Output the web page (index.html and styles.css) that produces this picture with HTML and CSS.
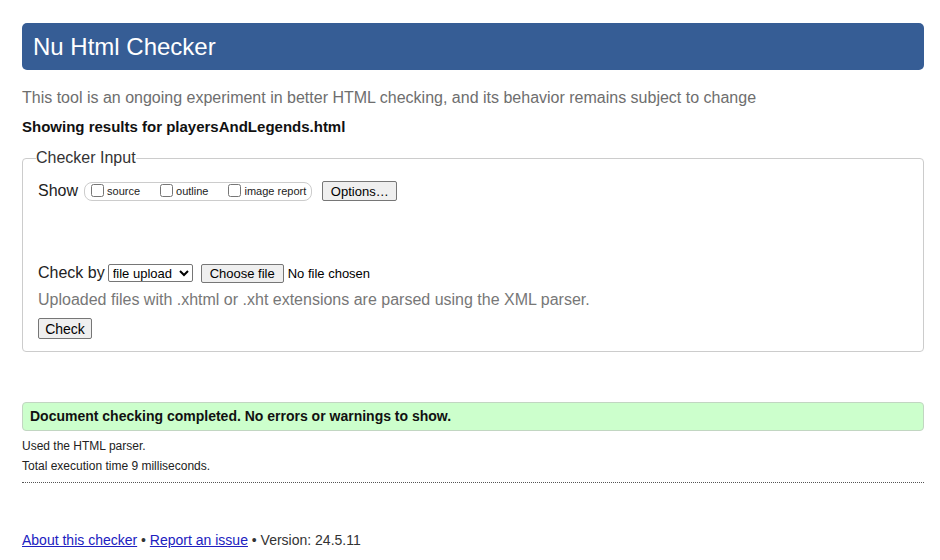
FILE: index.html
```html
<!DOCTYPE html>
<html lang="en">
<head>
<meta charset="utf-8">
<title>Nu Html Checker</title>
<link rel="stylesheet" href="styles.css">
</head>
<body>
<h1 class="header">Nu Html Checker</h1>
<p class="tagline">This tool is an ongoing experiment in better HTML checking, and its behavior remains subject to change</p>
<p class="showing">Showing results for playersAndLegends.html</p>
<form class="form">
<fieldset class="checker">
<legend class="legend">Checker Input</legend>
<div class="row row-show">
<span class="label">Show</span>
<span class="group">
<label class="opt"><input type="checkbox" class="cb">source</label>
<label class="opt"><input type="checkbox" class="cb">outline</label>
<label class="opt"><input type="checkbox" class="cb">image report</label>
</span>
<button type="button" class="btn btn-options">Options…</button>
</div>
<div class="row row-check">
<span class="label">Check by</span>
<select class="select"><option>file upload</option></select>
<button type="button" class="btn btn-file">Choose file</button>
<span class="nofile">No file chosen</span>
</div>
<p class="note">Uploaded files with .xhtml or .xht extensions are parsed using the XML parser.</p>
<button type="button" class="btn btn-check">Check</button>
</fieldset>
</form>
<p class="success">Document checking completed. No errors or warnings to show.</p>
<p class="details">Used the HTML parser.</p>
<p class="details details-last">Total execution time 9 milliseconds.</p>
<p class="footer"><a href="#">About this checker</a> • <a href="#">Report an issue</a> • Version: 24.5.11</p>
</body>
</html>
```

FILE: styles.css
```css
html, body {
  margin: 0;
  background: #fff;
}
body {
  padding: 23px 16px 0 22px;
  font-family: "Liberation Sans", Arial, sans-serif;
  color: #222;
}
.header {
  margin: 0;
  height: 47px;
  line-height: 47px;
  padding-left: 11px;
  background: #365d95;
  color: #fff;
  font-size: 24px;
  font-weight: normal;
  border-radius: 5px;
}
.tagline {
  margin: 18px 0 0;
  font-size: 16px;
  line-height: 20px;
  color: #6e6e6e;
}
.showing {
  margin: 9px 0 0;
  font-size: 15px;
  line-height: 20px;
  font-weight: bold;
  color: #111;
}
.form {
  margin: 12px 0 0;
}
.checker {
  margin: 0;
  padding: 0 15px 12px 15px;
  border: 1px solid #ccc;
  border-radius: 4px;
  min-width: 0;
}
.legend {
  padding: 0;
  margin-left: -2px;
  font-size: 16px;
  line-height: 18px;
  color: #333;
}
.row {
  display: flex;
  align-items: center;
}
.row-show {
  margin-top: 13px;
  height: 22px;
}
.label {
  font-size: 16px;
  color: #222;
}
.group {
  display: inline-flex;
  align-items: center;
  margin-left: 6px;
  height: 17px;
  padding: 0 5px 0 6px;
  border: 1px solid #ccc;
  border-radius: 8px;
}
.opt {
  display: inline-flex;
  align-items: center;
  font-size: 11px;
  line-height: 13px;
  padding-top: 1px;
  color: #222;
  margin-right: 20px;
}
.opt:last-child {
  margin-right: 0;
}
.cb {
  margin: -2px 3px 0 0;
  width: 13px;
  height: 13px;
}
.btn {
  font-family: "Liberation Sans", Arial, sans-serif;
  font-size: 13px;
  color: #000;
  background: #efefef;
  border: 1px solid #767676;
  border-radius: 2px;
  padding: 1px 6px;
  height: 20px;
}
.btn-options {
  margin-left: 10px;
  width: 75px;
}
.row-check {
  margin-top: 60px;
  height: 22px;
}
.select {
  margin-left: 3px;
  font-family: "Liberation Sans", Arial, sans-serif;
  font-size: 13px;
  height: 18px;
  width: 85px;
  padding: 0;
  border: 1px solid #767676;
  border-radius: 2px;
  background: #fff;
  color: #000;
}
.btn-file {
  margin-left: 8px;
  width: 83px;
  height: 19px;
  padding: 0 6px;
}
.nofile {
  margin-left: 4px;
  font-size: 13px;
  color: #000;
}
.note {
  margin: 6px 0 0;
  font-size: 16px;
  line-height: 20px;
  color: #777;
}
.btn-check {
  margin-top: 8px;
  display: block;
  font-size: 14px;
  width: 54px;
  height: 21px;
}
.success {
  margin: 50px 0 0;
  height: 27px;
  line-height: 27px;
  padding-left: 7px;
  background: #ccffcc;
  border: 1px solid #c2d6c2;
  border-radius: 4px;
  font-size: 14px;
  font-weight: bold;
  color: #111;
}
.details {
  margin: 0;
  font-size: 12px;
  line-height: 20px;
  color: #222;
}
.success + .details {
  margin-top: 5px;
}
.details-last {
  padding-bottom: 6px;
  border-bottom: 1px dotted #555;
}
.footer {
  margin: 47px 0 0;
  font-size: 14px;
  line-height: 20px;
  color: #333;
}
.footer a {
  color: #2020c0;
}
```
